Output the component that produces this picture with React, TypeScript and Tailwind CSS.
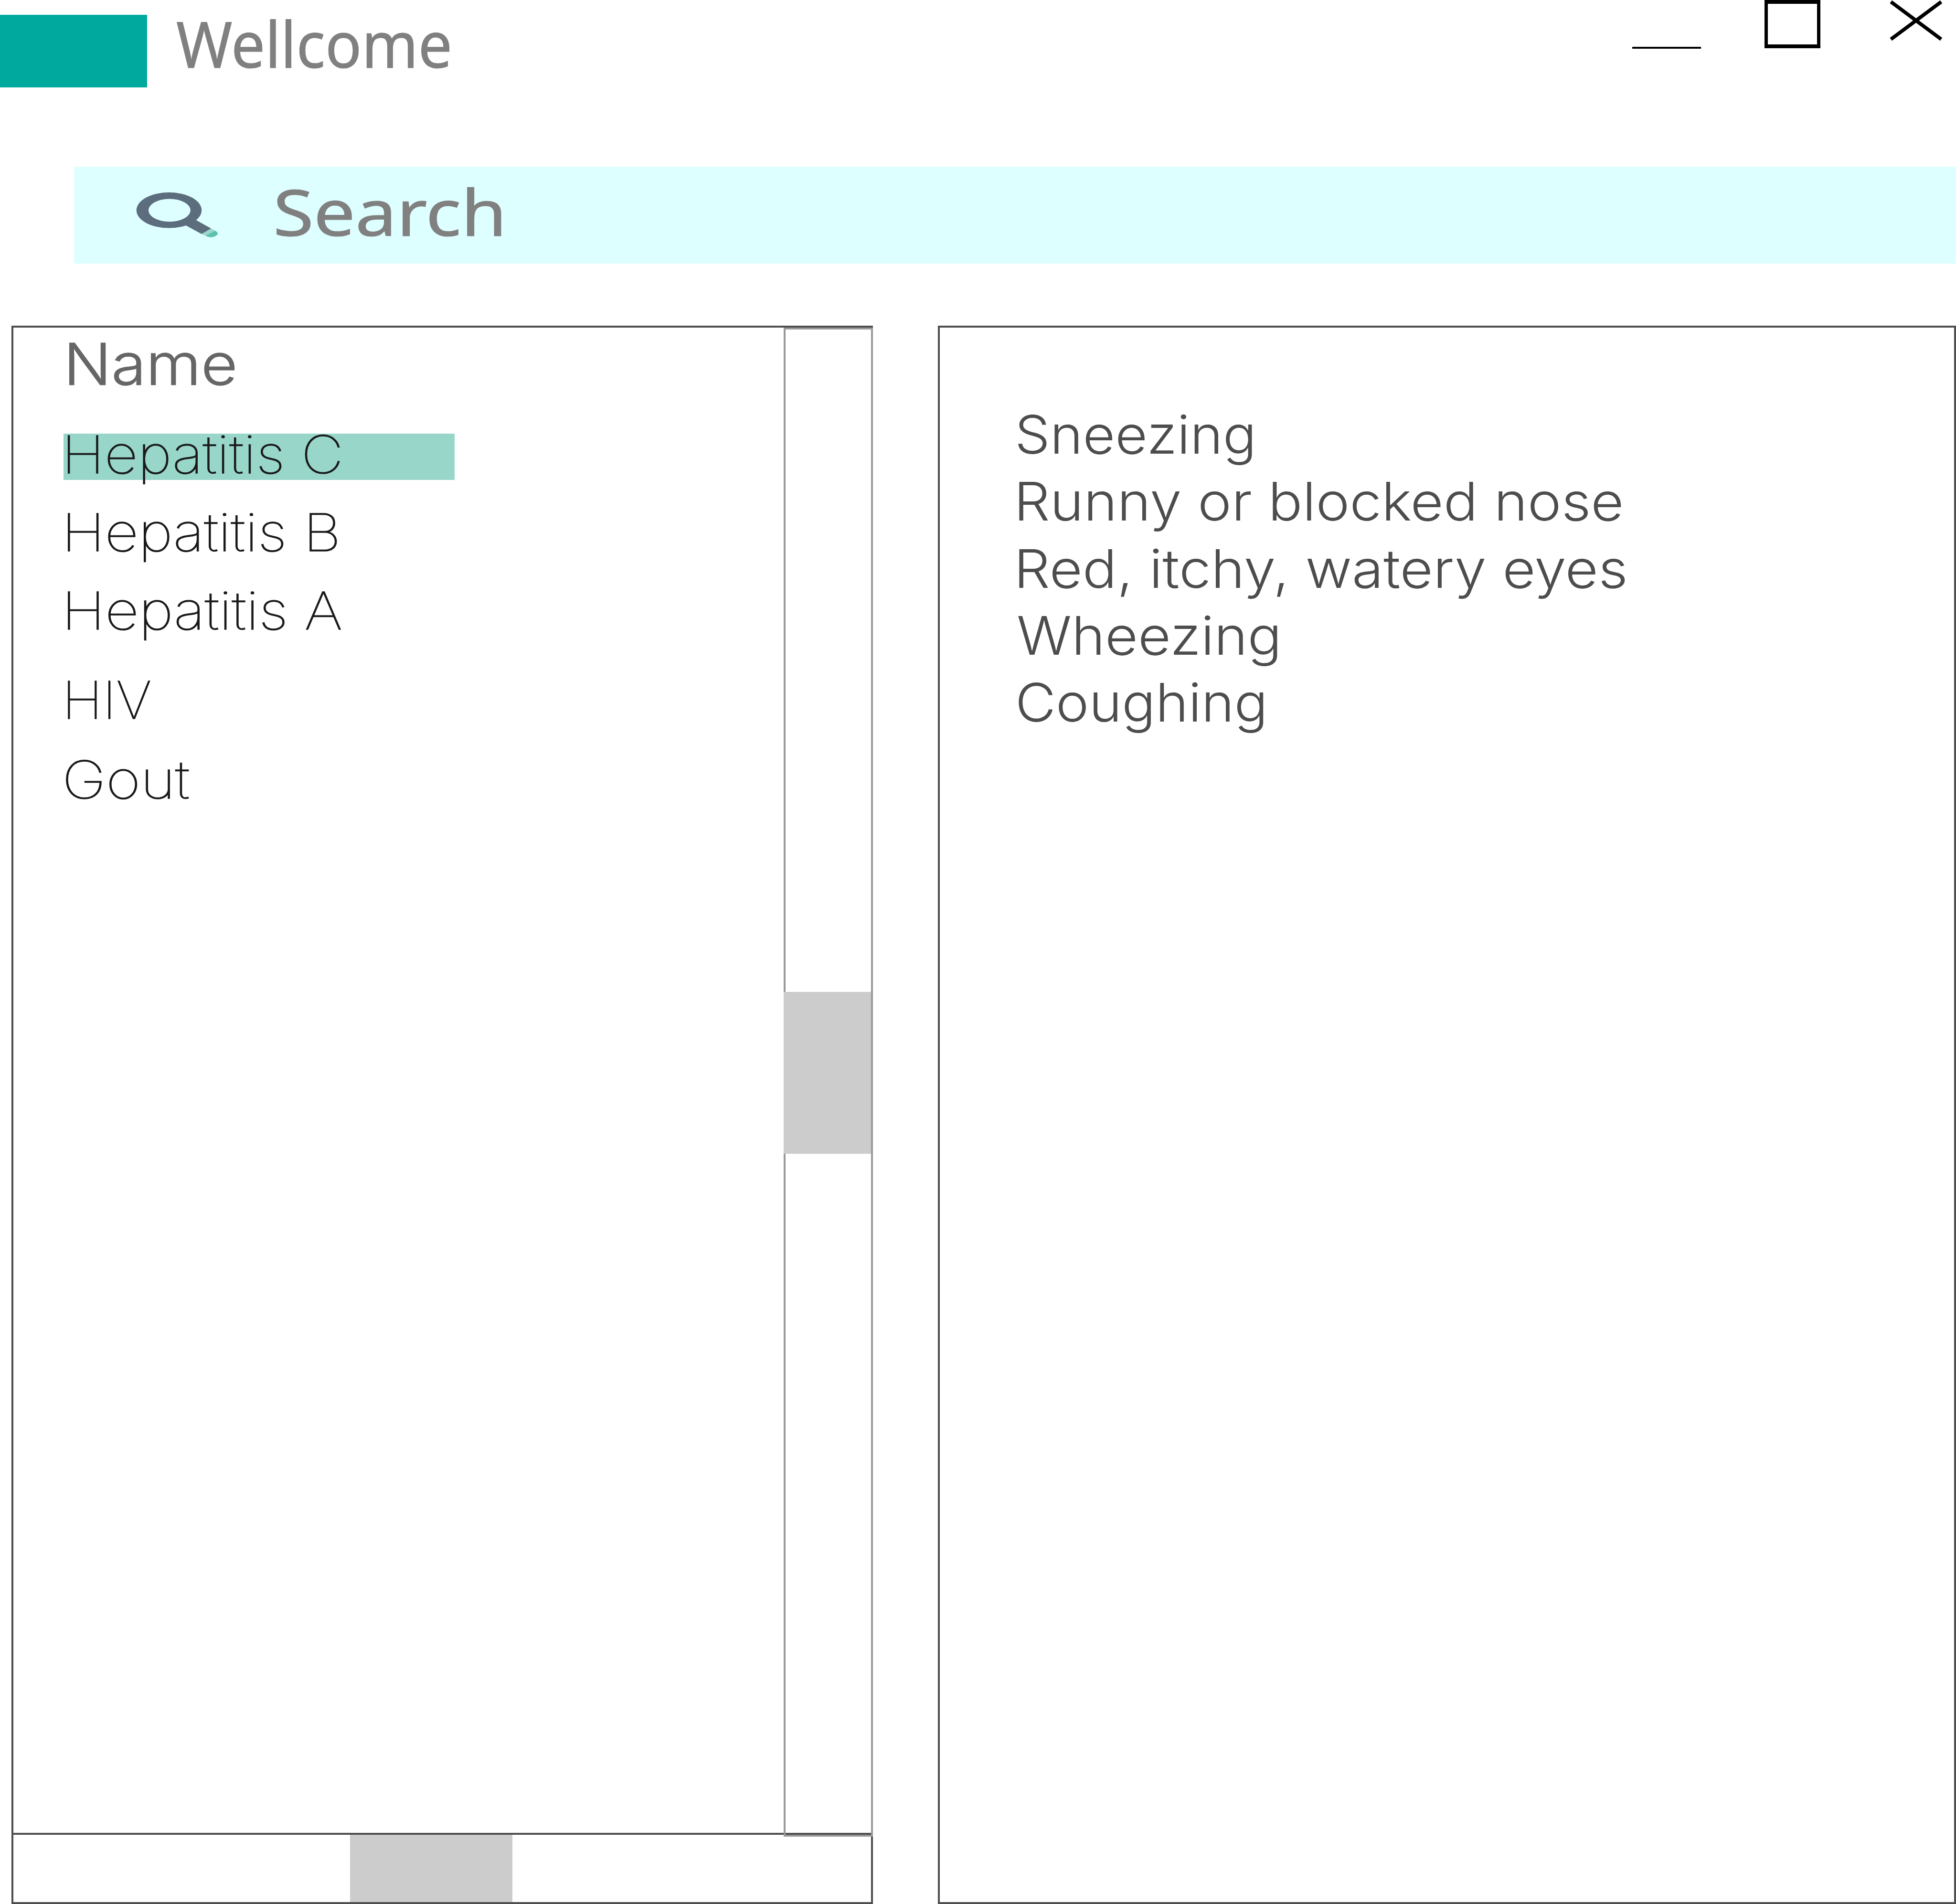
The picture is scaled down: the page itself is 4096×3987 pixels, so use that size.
import React from "react";

type TextLine = { label: string; className: string };

const diseases: (TextLine & { row: string })[] = [
  { label: "Hepatitis C", row: "bg-[#98d6ca]", className: "-ml-[4px] scale-x-[1.12]" },
  { label: "Hepatitis B", row: "mt-[66px]", className: "-ml-[4px] scale-x-[1.13]" },
  { label: "Hepatitis A", row: "mt-[67px]", className: "-ml-[4px] scale-x-[1.136]" },
  { label: "HIV", row: "mt-[90px]", className: "-ml-[3px] scale-x-[1.058]" },
  { label: "Gout", row: "mt-[70px]", className: "-ml-[3px] scale-x-[1.144]" },
];

const symptoms: TextLine[] = [
  { label: "Sneezing", className: "scale-x-[1.053]" },
  { label: "Runny or blocked nose", className: "-ml-[2px] scale-x-[1.077]" },
  { label: "Red, itchy, watery eyes", className: "-ml-[2px] scale-x-[1.079]" },
  { label: "Wheezing", className: "ml-[4px] scale-x-[1.072]" },
  { label: "Coughing", className: "ml-[1px] scale-x-[1.053]" },
];

function SearchIcon() {
  return (
    <svg viewBox="300 425 195 115" className="mt-[48.4px] ml-[126px] h-[107.5px] w-[182.4px] shrink-0">
      <path d="M438 493 L472.5 512.3 L451 524.4 L415 505 Z" fill="#5c6d7e" />
      <path
        fillRule="evenodd"
        fill="#5c6d7e"
        d="M305 471.2 a73 40 0 1 1 146 0 a73 40 0 1 1 -146 0 Z M332 471.4 a47 25.6 0 1 0 94 0 a47 25.6 0 1 0 -94 0 Z"
      />
      <path d="M472.5 512.3 L481 517.1 L460 528.6 L451 524.4 Z" fill="#98d6ca" />
      <path d="M481 517.1 C489 521.3 488.5 525 483 528.5 C477 532.3 468 533 460 528.6 Z" fill="#5cc0ae" />
    </svg>
  );
}

function TitleBar() {
  return (
    <header className="flex h-[349px] shrink-0 items-start">
      <div className="mt-[31px] h-[152px] w-[308px] bg-[#00a99d]" />
      <h1 className="mt-[24px] ml-[61.4px] origin-left scale-x-[0.95] text-[133px] leading-none whitespace-nowrap text-[#808080] font-['Noto_Sans',sans-serif] [-webkit-text-stroke:1px_#808080]">
        Wellcome
      </h1>
      <div className="mr-[28px] ml-auto flex items-start">
        <button aria-label="Minimize" className="mt-[97.5px] h-[4px] w-[144px] bg-black" />
        <button aria-label="Maximize" className="ml-[133px] h-[101px] w-[117px] border-x-[7px] border-y-[8px] border-black" />
        <button aria-label="Close" className="ml-[145px]">
          <svg viewBox="0 0 111 86" className="block h-[86px] w-[111px]" stroke="black" strokeWidth="7.6">
            <path d="M2.7 3.8 L108 82.2 M108 3.8 L2.7 82.2" />
          </svg>
        </button>
      </div>
    </header>
  );
}

function DiseasePanel() {
  return (
    <section className="flex w-[1804px] flex-col">
      <div className="flex h-[3160px] border-[4px] border-[#4d4d4d]">
        <div className="flex-1 pt-[16px] pl-[104.5px] font-[Inter,sans-serif]">
          <h2 className="h-[206px] w-max origin-left scale-x-[1.096] text-[120.5px] leading-none font-light text-[#666666] [-webkit-text-stroke:1.2px_#666666]">
            Name
          </h2>
          <ul>
            {diseases.map((d) => (
              <li key={d.label} className={`h-[97px] w-[819px] ${d.row}`}>
                <span
                  className={`block w-max origin-left text-[109px] leading-[87.5px] font-thin whitespace-nowrap text-[#1a1a1a] [-webkit-text-stroke:1.6px_#1a1a1a] ${d.className}`}
                >
                  {d.label}
                </span>
              </li>
            ))}
          </ul>
        </div>
        <div className="relative z-10 -mr-[4px] -mb-[8px] w-[187px] border-[4px] border-[#999999]">
          <div className="mt-[1387px] -ml-[4px] h-[339px] w-[183px] bg-[#cccccc]" />
        </div>
      </div>
      <div className="h-[145px] border-x-[4px] border-b-[4px] border-[#4d4d4d]">
        <div className="ml-[705px] h-full w-[340px] bg-[#cccccc]" />
      </div>
    </section>
  );
}

function SymptomPanel() {
  return (
    <section className="ml-[136px] flex-1 border-[4px] border-[#4d4d4d] pt-[154px] pl-[157px] font-[Inter,sans-serif]">
      {symptoms.map((s) => (
        <p
          key={s.label}
          className={`w-max origin-left text-[111px] leading-[140.35px] font-light whitespace-nowrap text-[#4d4d4d] ${s.className}`}
        >
          {s.label}
        </p>
      ))}
    </section>
  );
}

export default function App() {
  return (
    <div className="flex h-[3987px] w-[4096px] flex-col overflow-hidden bg-white">
      <TitleBar />
      <div className="ml-[154.5px] flex h-[203px] shrink-0 items-start bg-[#deffff]">
        <SearchIcon />
        <span className="mt-[26.7px] ml-[109px] origin-left scale-x-[1.162] text-[133px] leading-none text-[#808080] font-['Noto_Sans',sans-serif] [-webkit-text-stroke:1.2px_#808080]">
          Search
        </span>
      </div>
      <main className="mt-[130px] flex flex-1 pl-[24px]">
        <DiseasePanel />
        <SymptomPanel />
      </main>
    </div>
  );
}
